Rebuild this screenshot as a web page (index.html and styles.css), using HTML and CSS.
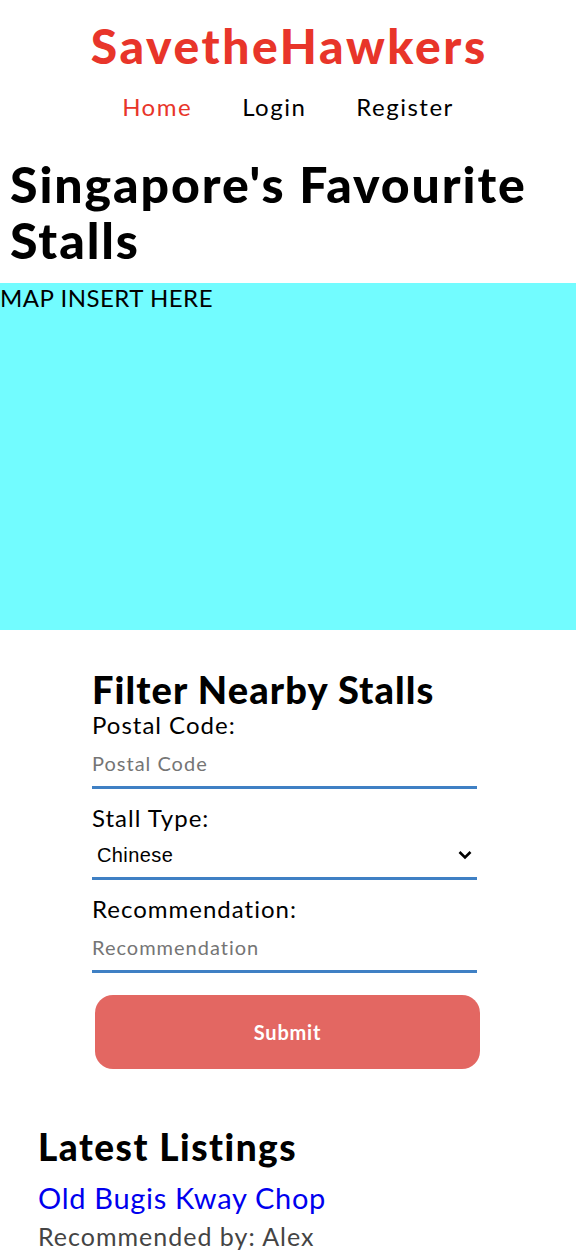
FILE: index.html
```html
<!DOCTYPE html>
<html lang="en">
<head>
<meta charset="utf-8">
<title>SavetheHawkers</title>
<link rel="stylesheet" href="styles.css">
</head>
<body>
<header class="site-header">
  <div class="brand">SavetheHawkers</div>
  <nav class="nav">
    <a class="nav-link active" href="#">Home</a>
    <a class="nav-link" href="#">Login</a>
    <a class="nav-link" href="#">Register</a>
  </nav>
</header>
<h1 class="page-title">Singapore's Favourite Stalls</h1>
<div class="map">MAP INSERT HERE</div>
<form class="filter">
  <h2 class="filter-title">Filter Nearby Stalls</h2>
  <label class="field-label" for="postal">Postal Code:</label>
  <input class="field" id="postal" type="text" placeholder="Postal Code">
  <label class="field-label" for="type">Stall Type:</label>
  <div class="select-wrap">
    <select class="field select" id="type">
      <option>Chinese</option>
      <option>Malay</option>
      <option>Indian</option>
    </select>
    <svg class="chev" width="14" height="10" viewBox="0 0 14 10"><path d="M1.5 2 L7 7.5 L12.5 2" fill="none" stroke="#000" stroke-width="2.6"/></svg>
  </div>
  <label class="field-label" for="rec">Recommendation:</label>
  <input class="field" id="rec" type="text" placeholder="Recommendation">
  <button class="submit" type="button">Submit</button>
</form>
<section class="listings">
  <h2 class="listings-title">Latest Listings</h2>
  <a class="listing-name" href="#">Old Bugis Kway Chop</a>
  <p class="listing-by">Recommended by: Alex</p>
</section>
</body>
</html>
```

FILE: styles.css
```css
* { box-sizing: border-box; }
body {
  margin: 0;
  font-family: "Lato", "Noto Sans", sans-serif;
  color: #000;
  background: #fff;
}
.site-header {
  display: flex;
  flex-direction: column;
  align-items: center;
  padding-top: 18px;
}
.brand {
  font-size: 48px;
  font-weight: 900;
  color: #e8352a;
  line-height: 56px;
  letter-spacing: 2.6px;
  margin-right: -2.6px;
}
.nav {
  display: flex;
  gap: 50px;
  margin-top: 15px;
}
.nav-link {
  font-size: 24px;
  line-height: 36px;
  letter-spacing: 1.5px;
  color: #000;
  text-decoration: none;
}
.nav-link.active { color: #e8352a; }
.page-title {
  margin: 31px 0 0 10px;
  font-size: 50px;
  font-weight: 900;
  line-height: 56px;
  letter-spacing: 1.9px;
  padding-bottom: 15px;
}
.map {
  background: #72fcff;
  height: 347px;
  width: 576px;
  font-size: 24px;
  line-height: 30px;
  letter-spacing: 0.5px;
}
.filter {
  display: flex;
  flex-direction: column;
  width: 385px;
  margin: 38px 0 0 92px;
}
.filter-title {
  margin: 0;
  font-size: 38px;
  font-weight: 900;
  line-height: 42px;
  letter-spacing: 1.1px;
}
.field-label {
  font-size: 24px;
  line-height: 30px;
  letter-spacing: 1px;
}
.field {
  font-family: inherit;
  font-size: 20px;
  letter-spacing: 1px;
  border: 0;
  border-bottom: 3px solid #3f80c4;
  height: 49px;
  padding: 0;
  margin-bottom: 14px;
  outline: none;
  background: transparent;
  color: #000;
}
.field::placeholder { color: #757575; }
.select-wrap {
  position: relative;
  display: flex;
  flex-direction: column;
}
.select {
  appearance: none;
  -webkit-appearance: none;
  padding-left: 5px;
  height: 47px;
  font-family: "Liberation Sans", Arial, sans-serif;
  font-size: 20px;
  letter-spacing: 0.4px;
}
.chev {
  position: absolute;
  right: 5px;
  top: 17px;
  pointer-events: none;
}
.submit {
  margin: 8px 0 0 3px;
  width: 385px;
  height: 74px;
  border: 0;
  border-radius: 18px;
  background: #e36762;
  color: #fff;
  font-family: inherit;
  font-size: 20px;
  font-weight: 700;
  letter-spacing: 0.8px;
}
.listings {
  display: flex;
  flex-direction: column;
  align-items: flex-start;
  padding: 56px 0 0 38px;
}
.listings-title {
  margin: 0;
  font-size: 37px;
  font-weight: 900;
  line-height: 44px;
  letter-spacing: 1.5px;
}
.listing-name {
  margin-top: 11px;
  font-size: 29px;
  line-height: 36px;
  letter-spacing: 0.7px;
  color: #0000ee;
  text-decoration: none;
}
.listing-by {
  margin: 5px 0 0;
  font-size: 25px;
  line-height: 30px;
  letter-spacing: 1px;
  color: #444;
}
```
